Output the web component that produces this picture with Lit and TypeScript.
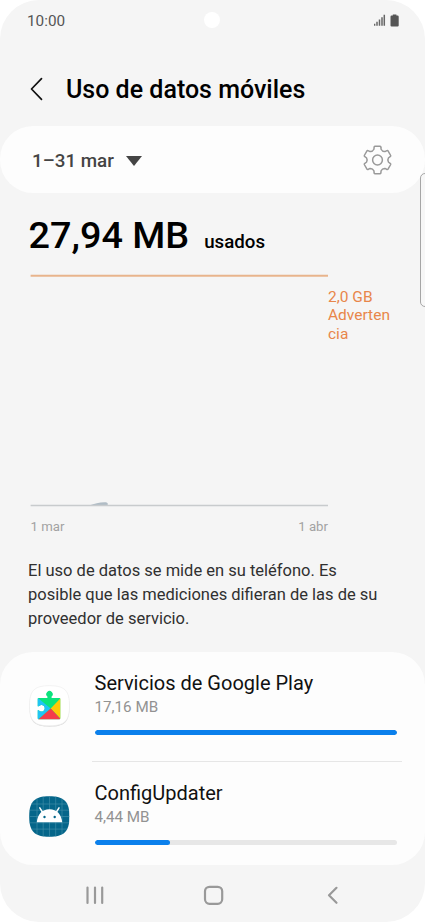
import { LitElement, html, css, svg, nothing } from "lit";
import { customElement, property } from "lit/decorators.js";

const polar = (deg: number, r: number) => {
  const a = (deg * Math.PI) / 180;
  return `${(r * Math.sin(a)).toFixed(2)} ${(-r * Math.cos(a)).toFixed(2)}`;
};

// Six-toothed gear outline centred on the origin.
const gearPath = () => {
  let d = "";
  for (let i = 0; i < 6; i++) {
    const c = i * 60;
    d += `${i ? "L" : "M"}${polar(c - 15.5, 12.8)} Q${polar(c - 15, 14)} ${polar(c - 10, 13.9)}`;
    d += `L${polar(c + 10, 13.9)} Q${polar(c + 15, 14)} ${polar(c + 15.5, 12.8)}`;
    d += `L${polar(c + 18.5, 11.3)} Q${polar(c + 30, 9.6)} ${polar(c + 41.5, 11.3)}`;
  }
  return d + "Z";
};

const playServicesIcon = svg`
  <svg width="42" height="43" viewBox="0.5 0 42 43">
    <defs>
      <clipPath id="piece"><path d="M10.200 12.900H18.900V11.600A3.200 3.200 0 1 1 23.100 11.600V12.900H30.800Q32 12.900 32 14.100V33Q32 34.200 30.800 34.200H10.200Q9 34.200 9 33V25.300H10.300A3.300 3.300 0 1 0 10.300 21.300H9V14.100Q9 12.900 10.200 12.900Z"/></clipPath>
    </defs>
    <path d="M21 1.900C36 1.900 41 6.500 41 21.800S36 41.700 21 41.700 1 37 1 21.800 6 1.900 21 1.900Z" fill="#d9d9d9"/>
    <path d="M21 .700C36 .700 41 5.500 41 20.700S36 40.800 21 40.800 1 36 1 20.700 6 .700 21 .700Z" fill="#fff" stroke="#eee" stroke-width=".7"/>
    <g clip-path="url(#piece)">
      <rect x="8" y="4" width="26" height="32" fill="#0be37c"/>
      <path d="M8 11.900L22.200 23.500 8 36Z" fill="#20c4f4"/>
      <path d="M33 12.300V34.800L22.200 23.500Z" fill="#ffc907"/>
      <path d="M9 35.200L22.200 23.500 33.200 35.200Z" fill="#f53b4b"/>
    </g>
  </svg>`;

const androidIcon = svg`
  <svg width="42" height="43" viewBox="0.5 0 42 43">
    <defs>
      <clipPath id="tile"><path d="M20.800 1.200C35.500 1.200 41 6.500 41 21.500S35.500 41.800 20.800 41.800 .700 36.500 .700 21.500 6 1.200 20.800 1.200Z"/></clipPath>
    </defs>
    <g clip-path="url(#tile)">
      <rect width="42" height="43" fill="#05668a"/>
      <path d="M8.500 0V43M14.700 0V43M21 0V43M27.200 0V43M33.500 0V43M0 9H42M0 15.200H42M0 21.500H42M0 27.800H42M0 34.100H42" stroke="#3d8ca8" stroke-width=".7"/>
    </g>
    <path d="M8.300 27.300C9 19.300 13.500 14.200 20.900 14.200S33 19.300 33.700 27.300Z" fill="#fff"/>
    <path d="M11.300 12.800L14.500 18M30.500 12.800L27.300 18" stroke="#fff" stroke-width="1.500" stroke-linecap="round"/>
    <circle cx="16" cy="22" r="1.200" fill="#05668a"/>
    <circle cx="26.200" cy="22" r="1.200" fill="#05668a"/>
  </svg>`;

@customElement("app-usage-row")
class AppUsageRow extends LitElement {
  @property() name = "";
  @property() amount = "";
  @property({ type: Number }) share = 0;
  @property() icon = "";

  static styles = css`
    :host { display: flex; }
    .icon { width: 42px; height: 43px; margin: 33px 23.500px 0 29px; flex: none; }
    .icon svg { display: block; }
    .body { flex: 1; margin: 19px 28px 0 0; }
    .name { font-size: 20px; line-height: 24px; color: #111; white-space: nowrap; }
    .amount { font-size: 15.200px; line-height: 20px; margin-top: 2px; color: #929292; }
    .track { height: 5px; margin: 13px 0 0; border-radius: 3px; background: #e7e7e7; overflow: hidden; }
    .fill { height: 100%; border-radius: 3px; background: #0b80ec; }
  `;

  render() {
    return html`
      <div class="icon">${this.icon === "android" ? androidIcon : playServicesIcon}</div>
      <div class="body">
        <div class="name">${this.name}</div>
        <div class="amount">${this.amount}</div>
        <div class="track"><div class="fill" style="width:${this.share}%"></div></div>
      </div>`;
  }
}

@customElement("app-root")
class AppRoot extends LitElement {
  private apps = [
    { name: "Servicios de Google Play", amount: "17,16 MB", share: 100, icon: "play" },
    { name: "ConfigUpdater", amount: "4,44 MB", share: 25, icon: "android" },
  ];

  static styles = css`
    :host { display: block; height: 922px; background: #fff; font-family: Roboto, "Liberation Sans", sans-serif; }
    * { box-sizing: border-box; }
    svg { display: block; }
    .phone { position: relative; display: flex; flex-direction: column; height: 922px; background: #f5f5f5; border-radius: 39px; overflow: hidden; }
    .status { height: 41px; display: flex; justify-content: space-between; padding: 11px 25px 0 27px; font-size: 15.300px; line-height: 20px; color: #555; }
    .camera { position: absolute; left: 204px; top: 12px; width: 16px; height: 16px; border-radius: 50%; background: #fff; }
    .edge { position: absolute; left: 420px; top: 173px; width: 12px; height: 134px; border: 1px solid #a6a6a6; border-radius: 5px; background: #f7f7f7; }
    .header { height: 85px; display: flex; align-items: center; padding: 11px 0 0 29px; }
    .header h1 { margin: 2px 0 0 21px; font-size: 25px; line-height: 30px; font-weight: 500; color: #000; white-space: nowrap; }
    .card { background: #fdfdfd; }
    .period { height: 67px; flex: none; border-radius: 33px; display: flex; align-items: center; padding: 0 32px; }
    .period span { margin-top: 2px; font-size: 18.800px; font-weight: 500; color: #444; white-space: nowrap; }
    .period .arrow { margin: 3px auto 0 12px; }
    .total { height: 81px; flex: none; display: flex; align-items: baseline; padding: 19px 0 0 28.500px; font-weight: 500; color: #000; white-space: nowrap; }
    .total b { font-size: 37.800px; line-height: 46px; font-weight: 500; }
    .total span { font-size: 18.700px; margin-left: 15px; }
    .chart { height: 234px; flex: none; display: flex; padding-left: 30px; }
    .plot { width: 298px; height: 234px; }
    .limit { width: 66px; margin-top: 14px; font-size: 15.500px; line-height: 18.300px; color: #e8864a; }
    .axis { display: flex; justify-content: space-between; width: 328px; padding: 10px 0 0 30.500px; height: 51px; flex: none; font-size: 13.200px; line-height: 18px; color: #a2a2a2; }
    .note { margin: 0 0 0 28px; height: 93px; flex: none; font-size: 16.500px; line-height: 24px; color: #303030; white-space: nowrap; }
    .apps { height: 213px; flex: none; border-radius: 33px; }
    .divider { height: 1px; background: #e6e6e6; margin: 26px 23px 0 92px; }
    .nav { flex: 1; display: flex; }
  `;

  render() {
    return html`
      <div class="phone">
        <div class="camera"></div>
        <div class="edge"></div>
        <div class="status">
          <span>10:00</span>
          <svg width="26" height="17" viewBox="0 0 26 17">
            <path d="M.6 14.800V12.800M3 14.800V10.800M5.500 14.800V8.500M8 14.800V6.200M10.300 14.800V3.800" stroke="#666" stroke-width="1.500"/>
            <path d="M17.600 4.600H18.800V3.500H22.400V4.600H23.600Q24.700 4.600 24.700 5.700V14.500Q24.700 15.600 23.600 15.600H17.600Q16.500 15.600 16.500 14.500V5.700Q16.500 4.600 17.600 4.600Z" fill="#555"/>
          </svg>
        </div>
        <div class="header">
          <svg width="16" height="24" viewBox="0 0 16 24"><path d="M12.500 1.700L2.500 12 12.500 22.300" fill="none" stroke="#111" stroke-width="1.700" stroke-linecap="round" stroke-linejoin="round"/></svg>
          <h1>Uso de datos móviles</h1>
        </div>
        <div class="card period">
          <span>1–31 mar</span>
          <svg class="arrow" width="16" height="10" viewBox="0 0 16 10"><path d="M0 0H16L8 10Z" fill="#444"/></svg>
          <svg width="31" height="31" viewBox="-15.500 -16 31 31" fill="none" stroke="#999" stroke-width="1.500" stroke-linejoin="round"><path d=${gearPath()}/><circle r="4.900"/></svg>
        </div>
        <div class="total"><b>27,94 MB</b><span>usados</span></div>
        <div class="chart">
          <svg class="plot" viewBox="0 0 298 234">
            <path d="M.6 1.700H298" stroke="#e8b48c" stroke-width="2"/>
            <path d="M59 231.500C65 229.500 70 228 76 228.300Q78.500 228.800 77.500 231.500Z" fill="#b0bcc5"/>
            <path d="M.6 231.500H298" stroke="#c8cbcd" stroke-width="1.300"/>
          </svg>
          <div class="limit">2,0 GB<br />Adverten<br />cia</div>
        </div>
        <div class="axis"><span>1 mar</span><span>1 abr</span></div>
        <div class="note">El uso de datos se mide en su teléfono. Es<br />posible que las mediciones difieran de las de su<br />proveedor de servicio.</div>
        <div class="card apps">
          ${this.apps.map((a, i) => html`
            ${i ? html`<div class="divider"></div>` : nothing}
            <app-usage-row .name=${a.name} .amount=${a.amount} .share=${a.share} .icon=${a.icon}></app-usage-row>`)}
        </div>
        <div class="nav">
          <svg width="425" height="57" viewBox="0 865 425 57" fill="none" stroke="#999" stroke-width="2.200" stroke-linecap="round" stroke-linejoin="round">
            <path d="M87.500 887.500V903M95 887.500V903M102.200 887.500V903"/>
            <rect x="205" y="886.800" width="17.200" height="17" rx="4.500"/>
            <path d="M336.500 887.800L329 895.300 336.500 902.800"/>
          </svg>
        </div>
      </div>`;
  }
}
